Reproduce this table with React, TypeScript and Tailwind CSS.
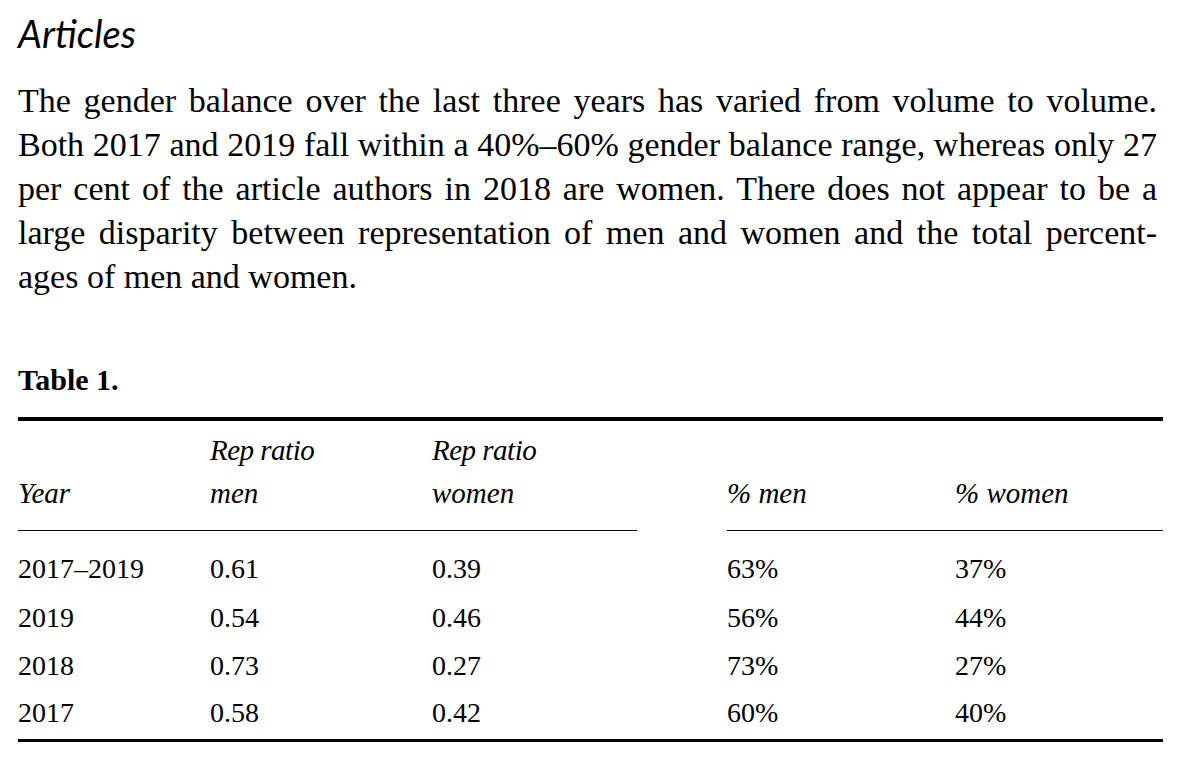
import React from "react";

const serif = "font-['Liberation_Serif',serif]";

const lines = [
  "The gender balance over the last three years has varied from volume to volume.",
  "Both 2017 and 2019 fall within a 40%–60% gender balance range, whereas only 27",
  "per cent of the article authors in 2018 are women. There does not appear to be a",
  "large disparity between representation of men and women and the total percent-",
];

const rows = [
  { year: "2017–2019", men: "0.61", women: "0.39", pm: "63%", pw: "37%", cls: "h-[49px]" },
  { year: "2019", men: "0.54", women: "0.46", pm: "56%", pw: "44%", cls: "h-[49px]" },
  { year: "2018", men: "0.73", women: "0.27", pm: "73%", pw: "27%", cls: "h-[48px]" },
  { year: "2017", men: "0.58", women: "0.42", pm: "60%", pw: "40%", cls: "h-[45px]" },
];

export default function App() {
  return (
    <div className={`w-[1200px] h-[763px] bg-white text-black overflow-hidden pl-[18px] ${serif}`}>
      <div className="w-[1145px]">
        <h2 className="font-['Lato',sans-serif] italic font-normal text-[38px] leading-none pt-[14px]">
          Articles
        </h2>

        <div className="mt-[27px] w-[1139px] text-[34px] leading-[44px]">
          {lines.map((l) => (
            <div key={l} className="text-justify [text-align-last:justify]">
              {l}
            </div>
          ))}
          <div>ages of men and women.</div>
        </div>

        <div className="mt-[66px] font-bold text-[30px] leading-none">Table 1.</div>

        <div className="mt-[22px] border-t-[4px] border-black" />

        <div className="grid grid-cols-[192px_222px_295px_228px_1fr] italic text-[29px] leading-[43px] pt-[8px]">
          <div />
          <div className="tracking-[-0.5px]">Rep ratio</div>
          <div className="tracking-[-0.5px]">Rep ratio</div>
          <div />
          <div />
          <div>Year</div>
          <div>men</div>
          <div>women</div>
          <div>% men</div>
          <div>% women</div>
        </div>

        <div className="grid grid-cols-[192px_222px_295px_228px_1fr] mt-[15px]">
          <div className="col-span-3 mr-[90px] border-t border-black" />
          <div className="col-span-2 border-t border-black" />
        </div>

        <div className="text-[28px] pt-[13px]">
          {rows.map((r) => (
            <div key={r.year} className={`grid grid-cols-[192px_222px_295px_228px_1fr] items-center ${r.cls}`}>
              <div>{r.year}</div>
              <div>{r.men}</div>
              <div>{r.women}</div>
              <div>{r.pm}</div>
              <div>{r.pw}</div>
            </div>
          ))}
        </div>

        <div className="mt-[4px] border-t-[3px] border-black" />
      </div>
    </div>
  );
}
